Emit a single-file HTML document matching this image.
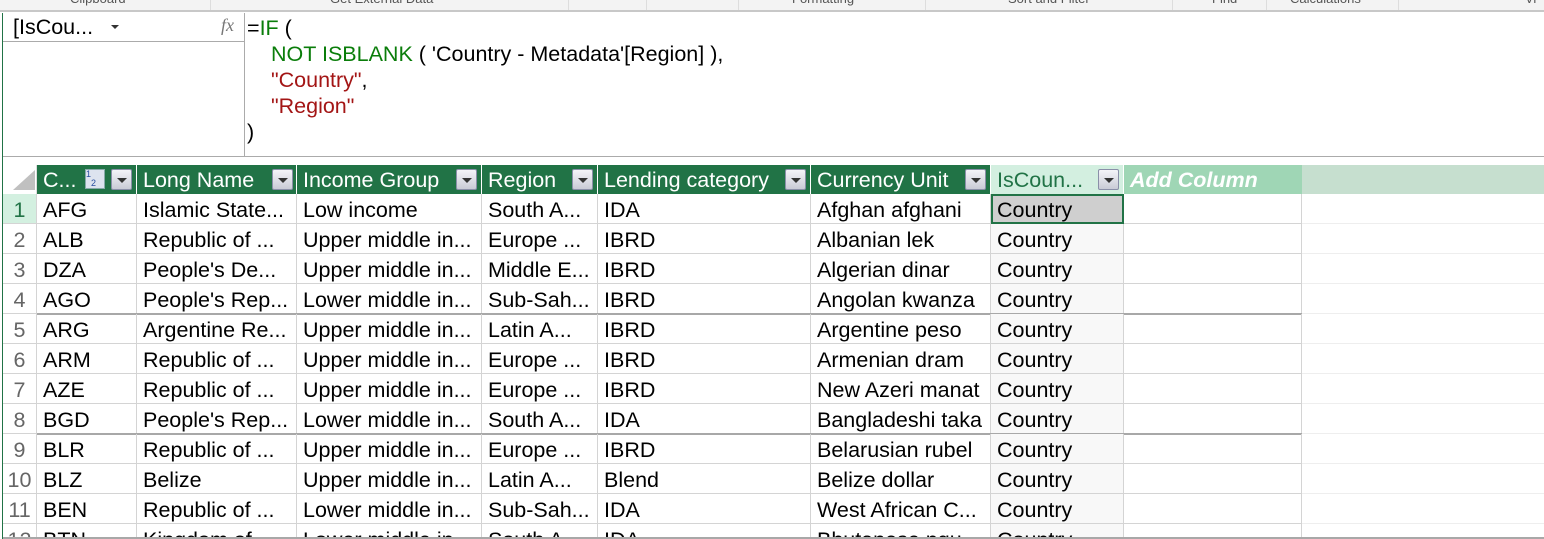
<!DOCTYPE html>
<html><head><meta charset="utf-8"><style>
*{margin:0;padding:0;box-sizing:border-box}
html,body{width:1544px;height:539px;overflow:hidden;background:#fff}
body{font-family:"Liberation Sans",Arial,sans-serif;position:relative}
#w{position:absolute;left:0;top:0;width:1544px;height:539px;overflow:hidden}
.a{position:absolute}
.rib{left:0;top:0;width:1544px;height:12px;background:#f3f3f3;border-bottom:2px solid #c8c8c8;overflow:hidden;font-size:13px;color:#555}
.rib span{position:absolute;top:-9px}
.rib i{position:absolute;top:0;width:1px;height:10px;background:#ddd}
.f{font-size:21.5px;line-height:26px;white-space:pre;position:absolute}
.g{color:#0a7d0a}.r{color:#a31515}
.h{top:165px;height:29px;background:#217346;color:#fff;font-size:21.5px;line-height:30px;padding-left:6px;border-right:1px solid #fff;white-space:nowrap;overflow:hidden}
.dd{position:absolute;top:4px;width:21px;height:21px;background:linear-gradient(#f4f4f8,#c9cbd6);border:1px solid #8a8fa8;border-radius:2px}
.dd:after{content:"";position:absolute;left:5px;top:8px;border-left:5px solid transparent;border-right:5px solid transparent;border-top:5px solid #333}
.c{height:30px;font-size:21.5px;line-height:32px;padding-left:6px;border-right:1px solid #d4d4d4;border-bottom:1px solid #d4d4d4;white-space:nowrap;overflow:hidden;color:#000}
.n{color:#666;text-align:center;padding-left:0}
</style></head><body><div id="w">
<div class="a rib">
<span style="left:70px">Clipboard</span><i style="left:210px"></i>
<span style="left:330px">Get External Data</span><i style="left:568px"></i><i style="left:646px"></i><i style="left:738px"></i>
<span style="left:792px">Formatting</span><i style="left:925px"></i>
<span style="left:1008px">Sort and Filter</span><i style="left:1172px"></i>
<span style="left:1212px">Find</span><i style="left:1266px"></i>
<span style="left:1290px">Calculations</span><i style="left:1398px"></i>
<span style="left:1525px">Vi</span>
</div>
<div class="a" style="left:2px;top:13px;width:1px;height:526px;background:#217346"></div>
<div class="a" style="left:3px;top:41px;width:241px;height:1px;background:#ababab"></div>
<div class="a" style="left:244px;top:13px;width:1px;height:144px;background:#ababab"></div>
<div class="a" style="left:3px;top:156px;width:1541px;height:1px;background:#ababab"></div>
<div class="f" style="left:13px;top:14px">[IsCou...</div>
<div class="a" style="left:111px;top:25px;border-left:4px solid transparent;border-right:4px solid transparent;border-top:4px solid #333"></div>
<div class="a" style="left:221px;top:15px;font-family:'Liberation Serif',serif;font-style:italic;color:#777;font-size:18px">fx</div>
<div class="f" style="left:247px;top:15px">=<span class="g">IF</span> (</div>
<div class="f" style="left:271px;top:41px"><span class="g">NOT ISBLANK</span> ( 'Country - Metadata'[Region] ),</div>
<div class="f" style="left:271px;top:67px"><span class="r">"Country"</span>,</div>
<div class="f" style="left:271px;top:93px"><span class="r">"Region"</span></div>
<div class="f" style="left:247px;top:119px">)</div>
<div class="a" style="left:3px;top:165px;width:34px;height:29px;background:#fff;border-right:1px solid #ddd"></div>
<div class="a" style="left:13px;top:170px;width:0;height:0;border-left:22px solid transparent;border-bottom:20px solid #c0c0c0"></div>
<div class="a h" style="left:37px;width:100px">C...<div class="a" style="left:48px;top:4px;width:20px;height:20px;background:#dde3ef;border:1px solid #8aa;font-size:9px;line-height:9px;color:#2a4fa0">1<br>&nbsp;&nbsp;2</div><div class="dd" style="left:74px"></div></div>
<div class="a h" style="left:137px;width:160px">Long Name<div class="dd" style="left:135px"></div></div>
<div class="a h" style="left:297px;width:185px">Income Group<div class="dd" style="left:159px"></div></div>
<div class="a h" style="left:482px;width:116px">Region<div class="dd" style="left:90px"></div></div>
<div class="a h" style="left:598px;width:213px">Lending category<div class="dd" style="left:187px"></div></div>
<div class="a h" style="left:811px;width:180px">Currency Unit<div class="dd" style="left:154px"></div></div>
<div class="a h" style="left:991px;width:133px;background:#d3efe0;color:#217346">IsCoun...<div class="dd" style="left:107px"></div></div>
<div class="a h" style="left:1124px;width:178px;background:#9fd6b5;font-style:italic;font-weight:bold;color:#fff;border-right:none">Add Column</div>
<div class="a" style="left:1302px;top:165px;width:242px;height:29px;background:#c6dfcf"></div>
<div id="g"></div>
</div>
<script>
var d=[["AFG","Islamic State...","Low income","South A...","IDA","Afghan afghani"],
["ALB","Republic of ...","Upper middle in...","Europe ...","IBRD","Albanian lek"],
["DZA","People's De...","Upper middle in...","Middle E...","IBRD","Algerian dinar"],
["AGO","People's Rep...","Lower middle in...","Sub-Sah...","IBRD","Angolan kwanza"],
["ARG","Argentine Re...","Upper middle in...","Latin A...","IBRD","Argentine peso"],
["ARM","Republic of ...","Upper middle in...","Europe ...","IBRD","Armenian dram"],
["AZE","Republic of ...","Upper middle in...","Europe ...","IBRD","New Azeri manat"],
["BGD","People's Rep...","Lower middle in...","South A...","IDA","Bangladeshi taka"],
["BLR","Republic of ...","Upper middle in...","Europe ...","IBRD","Belarusian rubel"],
["BLZ","Belize","Upper middle in...","Latin A...","Blend","Belize dollar"],
["BEN","Republic of ...","Lower middle in...","Sub-Sah...","IDA","West African C..."],
["BTN","Kingdom of ...","Lower middle in...","South A...","IDA","Bhutanese ngu..."]];
var x=[3,37,137,297,482,598,811,991,1124,1302];var h="";
for(var i=0;i<12;i++){var t=194+i*30;var row=[String(i+1)].concat(d[i]).concat(["Country",""]);
for(var j=0;j<9;j++){var s="left:"+x[j]+"px;top:"+t+"px;width:"+(x[j+1]-x[j])+"px;";
var cl="a c"+(j==0?" n":"");
if(j==0&&i==0)s+="background:#d3f0e0;color:#217346;";
if(j==7)s+="background:#f8f8f8;";
if(j==7&&i==0)s+="background:#cfcfcf;outline:2px solid #217346;outline-offset:-2px;";
h+='<div class="'+cl+'" style="'+s+'">'+row[j]+'</div>';}
h+='<div class="a" style="left:1302px;top:'+(t+29)+'px;width:242px;height:1px;background:#eee"></div>';
if(i==3||i==7)h+='<div class="a" style="left:37px;top:'+(t+29)+'px;width:1265px;height:2px;background:#a8a8a8"></div>';}
h+='<div class="a" style="left:3px;top:537px;width:1541px;height:2px;background:#a8a8a8"></div>';
document.getElementById("g").innerHTML=h;
</script>
</body></html>
